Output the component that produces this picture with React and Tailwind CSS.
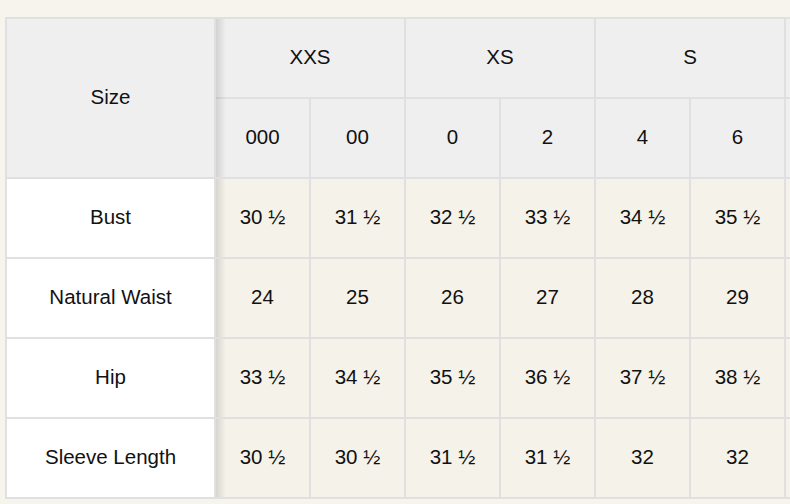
import React from "react";

const rows = [
  ["Bust", ["30 ½", "31 ½", "32 ½", "33 ½", "34 ½", "35 ½"]],
  ["Natural Waist", ["24", "25", "26", "27", "28", "29"]],
  ["Hip", ["33 ½", "34 ½", "35 ½", "36 ½", "37 ½", "38 ½"]],
  ["Sleeve Length", ["30 ½", "30 ½", "31 ½", "31 ½", "32", "32"]],
];

const sizes = ["000", "00", "0", "2", "4", "6"];

const stickyCls =
  "relative z-10 border-2 border-[#e0e0e0] text-center pb-[2px] after:content-[''] after:absolute after:top-0 after:bottom-0 after:left-full after:ml-[2px] after:w-[10px] after:bg-gradient-to-r after:from-black/[0.12] after:to-transparent";

const hd = "border-2 border-[#e0e0e0] bg-[#efefef] font-normal pb-[2px]";

export default function App() {
  return (
    <div
      className="w-[790px] h-[504px] overflow-hidden bg-[#f6f4ed] pl-[5px] pt-[17px] text-[#111111]"
      style={{ fontFamily: '"Liberation Sans", Arial, sans-serif' }}
    >
      <table className="w-[876px] min-w-[876px] border-collapse table-fixed text-[20.5px] leading-none">
        <colgroup>
          <col className="w-[209px]" />
          {sizes.map((s) => (
            <col key={s} className="w-[95px]" />
          ))}
          <col className="w-[95px]" />
        </colgroup>
        <thead>
          <tr className="h-[80px]">
            <th rowSpan={2} className={stickyCls + " bg-[#efefef] font-normal"}>
              Size
            </th>
            <th colSpan={2} className={hd}>XXS</th>
            <th colSpan={2} className={hd}>XS</th>
            <th colSpan={2} className={hd}>S</th>
            <th className={hd}></th>
          </tr>
          <tr className="h-[80px]">
            {sizes.map((s) => (
              <th key={s} className={hd}>
                {s}
              </th>
            ))}
            <th className={hd}></th>
          </tr>
        </thead>
        <tbody>
          {rows.map(([label, vals]) => (
            <tr key={label} className="h-[80px]">
              <td className={stickyCls + " bg-white"}>{label}</td>
              {vals.map((v, i) => (
                <td key={i} className="border-2 border-[#e0e0e0] bg-[#f5f2ea] text-center pb-[2px]">
                  {v}
                </td>
              ))}
              <td className="border-2 border-[#e0e0e0] bg-[#f5f2ea]"></td>
            </tr>
          ))}
        </tbody>
      </table>
    </div>
  );
}
